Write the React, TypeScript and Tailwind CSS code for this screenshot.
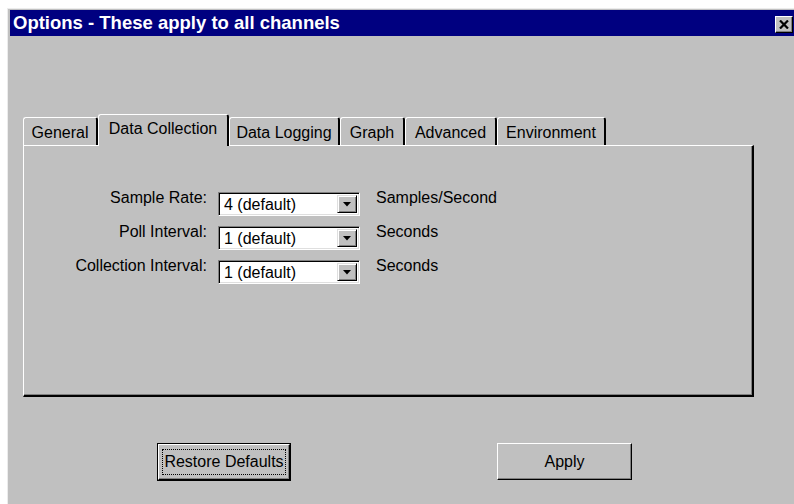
import React from "react";

const tabs = [
  { label: "General", w: "w-[75px]" },
  { label: "Data Collection", w: "w-[131px]", active: true },
  { label: "Data Logging", w: "w-[111px]" },
  { label: "Graph", w: "w-[65px]" },
  { label: "Advanced", w: "w-[92px]" },
  { label: "Environment", w: "w-[109px]" },
];

const rows = [
  { label: "Sample Rate:", value: "4 (default)", unit: "Samples/Second" },
  { label: "Poll Interval:", value: "1 (default)", unit: "Seconds" },
  { label: "Collection Interval:", value: "1 (default)", unit: "Seconds" },
];

function Combo({ value }: { value: string }) {
  return (
    <div className="flex h-[24px] w-[142px] border-t border-l border-[#808080] border-r border-b border-r-white border-b-white bg-white shadow-[inset_1px_1px_0_#000,inset_-1px_-1px_0_#dfdfdf]">
      <div className="flex-1 pl-[5px] pt-[3px] text-[16px] leading-[18px] text-black">{value}</div>
      <div className="my-[2px] mr-[2px] flex w-[20px] items-center justify-center border-t border-l border-[#dfdfdf] border-r border-b border-r-black border-b-black bg-[#c0c0c0] shadow-[inset_1px_1px_0_#fff,inset_-1px_-1px_0_#808080]">
        <svg width="8" height="5" viewBox="0 0 8 5">
          <path d="M0 0 H8 L4 4.5 Z" fill="#000" />
        </svg>
      </div>
    </div>
  );
}

export default function App() {
  return (
    <div className="h-[504px] w-[794px] overflow-hidden bg-white pl-[7px] pt-[8px] font-['Liberation_Sans',Arial,sans-serif]">
      <div className="h-full border-l border-t border-[#ececec] bg-[#c0c0c0] pl-[2px] pt-[1px]">
        {/* caption bar */}
        <div className="flex h-[26px] items-center justify-between bg-[#000080] pl-[3px] pr-[1px]">
          <span className="text-[18.5px] font-bold leading-none text-white">
            Options - These apply to all channels
          </span>
          <div className="mt-[2px] flex h-[17px] w-[18px] items-center justify-center border-t border-l border-white border-r border-b border-r-black border-b-black bg-[#c0c0c0] shadow-[inset_-1px_-1px_0_#808080]">
            <svg width="10" height="9" viewBox="0 0 10 9">
              <path d="M1 0.5 L9 8.5 M9 0.5 L1 8.5" stroke="#000" strokeWidth="2.2" />
            </svg>
          </div>
        </div>

        {/* tab strip */}
        <div className="ml-[13px] mt-[78px] flex h-[31px] items-end">
          {tabs.map((t) =>
            t.active ? (
              <div
                key={t.label}
                className={`${t.w} relative z-10 -mb-[1px] flex h-[32px] items-start justify-center rounded-t-[3px] border-l border-t border-white border-r-2 border-r-black bg-[#c0c0c0] pt-[5px] text-[16px] leading-[18px] text-black`}
              >
                {t.label}
              </div>
            ) : (
              <div
                key={t.label}
                className={`${t.w} flex h-[28px] items-start justify-center rounded-t-[3px] border-l border-t border-white border-r-2 border-r-black bg-[#c0c0c0] pt-[6px] text-[16px] leading-[18px] text-black`}
              >
                {t.label}
              </div>
            )
          )}
        </div>

        {/* tab page */}
        <div className="ml-[13px] h-[252px] w-[731px] border-l border-t border-white border-r-2 border-b-2 border-r-black border-b-black bg-[#c0c0c0] pt-[46px] shadow-[inset_-1px_-1px_0_#808080]">
          <div className="flex flex-col gap-[10px]">
            {rows.map((r) => (
              <div key={r.label} className="flex h-[24px] items-start text-[16px] leading-[18px] text-black">
                <div className="-mt-[3px] w-[183px] text-right">{r.label}</div>
                <div className="ml-[11px]">
                  <Combo value={r.value} />
                </div>
                <div className="-mt-[3px] ml-[16px]">{r.unit}</div>
              </div>
            ))}
          </div>
        </div>

        {/* dialog buttons */}
        <div className="ml-[147px] mt-[46px] flex items-start">
          <button className="h-[38px] w-[134px] border border-black bg-[#c0c0c0] p-0">
            <div className="flex h-full w-full items-center justify-center border-t border-l border-white border-r border-b border-r-black border-b-black shadow-[inset_-1px_-1px_0_#808080]">
              <span className="border border-dotted border-black px-[1px] text-[16px] leading-[24px] text-black">
                Restore Defaults
              </span>
            </div>
          </button>
          <button className="ml-[206px] flex h-[37px] w-[135px] items-center justify-center border-t border-l border-white border-r border-b border-r-black border-b-black bg-[#c0c0c0] text-[16px] text-black shadow-[inset_-1px_-1px_0_#808080]">
            Apply
          </button>
        </div>
      </div>
    </div>
  );
}
